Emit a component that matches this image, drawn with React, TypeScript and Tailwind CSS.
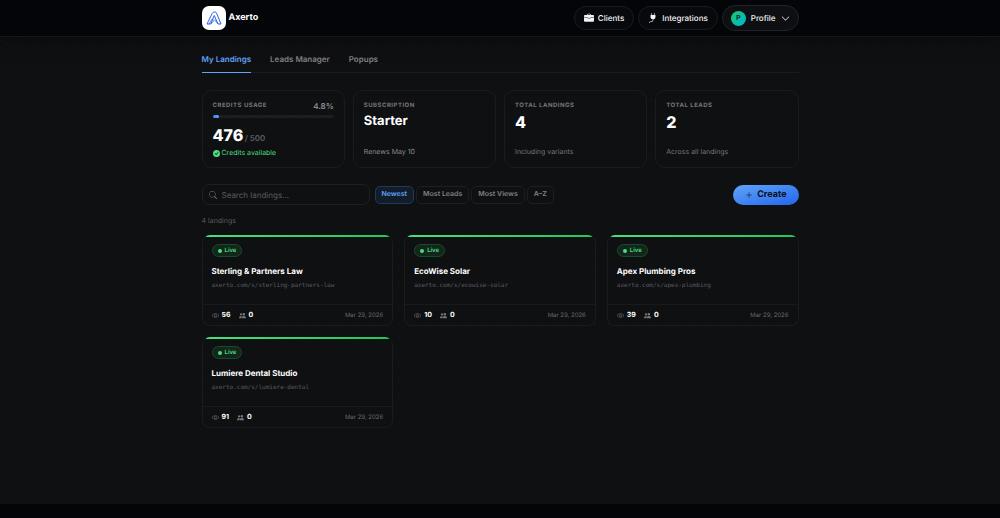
import { useState } from 'react'
import {
  BsBriefcaseFill,
  BsCheckCircleFill,
  BsChevronDown,
  BsEye,
  BsPeopleFill,
  BsPlugFill,
  BsPlusLg,
  BsSearch,
} from 'react-icons/bs'

type Landing = {
  name: string
  slug: string
  views: number
  leads: number
  date: string
}

const landings: Landing[] = [
  { name: 'Sterling & Partners Law', slug: 'sterling-partners-law', views: 56, leads: 0, date: 'Mar 29, 2026' },
  { name: 'EcoWise Solar', slug: 'ecowise-solar', views: 10, leads: 0, date: 'Mar 29, 2026' },
  { name: 'Apex Plumbing Pros', slug: 'apex-plumbing', views: 39, leads: 0, date: 'Mar 29, 2026' },
  { name: 'Lumiere Dental Studio', slug: 'lumiere-dental', views: 91, leads: 0, date: 'Mar 29, 2026' },
]

const tabs = ['My Landings', 'Leads Manager', 'Popups']
const sorts = ['Newest', 'Most Leads', 'Most Views', 'A–Z']

function Logo() {
  return (
    <span className="flex size-6 items-center justify-center rounded-[7px] bg-white">
      <svg viewBox="0 0 32 28" className="h-[14px] w-4" fill="none" stroke="#2f62e8" strokeWidth="2" strokeLinejoin="round">
        <path d="M2 26 12.5 4.5Q14 2 16.5 2h1.5q2 0 3 2l9 22h-6l-7.5-17L9.5 26Z" />
        <path d="M9.5 26 17 17.5l7 8.5M13 15l-7 11" strokeWidth="1.6" />
      </svg>
    </span>
  )
}

function Header() {
  return (
    <header className="relative border-b border-[#14161a] bg-[#040509] px-4 shadow-[0_4px_20px_rgba(0,0,0,0.35)]">
      <div className="mx-auto flex h-9 max-w-[597px] items-center justify-between">
        <a href="#" className="flex items-center gap-[3px] text-[9px] font-bold text-white">
          <Logo />
          Axerto
        </a>
        <nav className="flex items-center gap-1 text-[8px] font-medium text-[#f4f4f5]">
          <button type="button" className="flex h-6 items-center gap-1 rounded-full border border-[#1b1c20] bg-[#08090d] px-[9px]">
            <BsBriefcaseFill className="size-[10px]" />
            Clients
          </button>
          <button type="button" className="flex h-6 items-center gap-1 rounded-full border border-[#1b1c20] bg-[#08090d] px-[9px]">
            <BsPlugFill className="size-[10px]" />
            Integrations
          </button>
          <button type="button" className="flex h-[26px] items-center gap-[5px] rounded-full border border-[#222326] bg-[#0e0f12] px-2">
            <span className="flex size-[15px] items-center justify-center rounded-full bg-linear-to-br from-[#22c55e] to-[#06b6d4] text-[7px] font-bold text-[#0b2b27]">
              P
            </span>
            Profile
            <BsChevronDown className="size-[9px]" />
          </button>
        </nav>
      </div>
    </header>
  )
}

function StatCard({ label, children, note }: { label: string; children: React.ReactNode; note: React.ReactNode }) {
  return (
    <section className="flex h-[78px] flex-col rounded-[10px] border border-[#1b1c1f] bg-[#0f1012]/60 p-[10px]">
      <h2 className="text-[6px] leading-[10px] font-bold tracking-[0.5px] text-[#76777b] uppercase">{label}</h2>
      {children}
      <div className="mt-auto text-[7px] leading-[10px] text-[#76777b]">{note}</div>
    </section>
  )
}

function LandingCard({ landing }: { landing: Landing }) {
  return (
    <article className="overflow-hidden rounded-[8px] border border-t-0 border-[#1b1c1f] bg-[#0f1012]/60">
      <div className="h-[2px] bg-linear-to-r from-[#4ade80] to-[#22c55e]" />
      <div className="h-[67px] px-[9px] pt-[7px]">
        <span className="flex h-[13px] w-fit items-center gap-[3px] rounded-full border border-[#1a4a2e] bg-[#12261b] px-[5px] text-[6px] font-semibold text-[#4ade80]">
          <span className="size-1 rounded-full bg-[#4ade80]" />
          Live
        </span>
        <h3 className="mt-2 text-[8px] leading-3 font-bold text-white">{landing.name}</h3>
        <p className="mt-1 font-['DejaVu_Sans_Mono',monospace] text-[6px] leading-[10px] text-[#5b5c60]">
          axerto.com/s/{landing.slug}
        </p>
      </div>
      <div className="flex h-[21px] items-center gap-2 border-t border-[#191a1d] px-[9px] text-[7px]">
        <span className="flex items-center gap-[3px] font-bold text-white">
          <BsEye className="size-[7px] text-[#76777b]" />
          {landing.views}
        </span>
        <span className="flex items-center gap-[3px] font-bold text-white">
          <BsPeopleFill className="size-[7px] text-[#76777b]" />
          {landing.leads}
        </span>
        <time className="ml-auto text-[6px] text-[#6b6c70]">{landing.date}</time>
      </div>
    </article>
  )
}

export default function App() {
  const [tab, setTab] = useState('My Landings')
  const [sort, setSort] = useState('Newest')
  const [query, setQuery] = useState('')

  const shown = landings.filter((l) => l.name.toLowerCase().includes(query.toLowerCase()))

  return (
    <div className="flex min-h-screen flex-col bg-[#040509] font-['Inter',sans-serif] text-white [text-rendering:geometricPrecision] [&_button]:[text-rendering:inherit]">
      <Header />
      <main className="mb-[14px] grow bg-[#0f1012] bg-[radial-gradient(circle,#131417_1px,transparent_1px)] bg-size-[14px_14px] px-4">
        <div className="mx-auto max-w-[597px] pt-3">
          <div role="tablist" className="flex gap-[19px] border-b border-[#1b1c1f]">
            {tabs.map((t) => (
              <button
                key={t}
                type="button"
                role="tab"
                aria-selected={t === tab}
                onClick={() => setTab(t)}
                className={`-mb-px h-6 border-b pb-1 text-[8px] font-semibold ${
                  t === tab ? 'border-[#60a5fa] text-[#60a5fa]' : 'border-transparent text-[#808185]'
                }`}
              >
                {t}
              </button>
            ))}
          </div>

          <div className="mt-[17px] grid grid-cols-4 gap-2">
            <section className="flex h-[78px] flex-col rounded-[10px] border border-[#1b1c1f] bg-[#0f1012]/60 p-[10px]">
              <div className="flex items-center justify-between">
                <h2 className="text-[6px] leading-[10px] font-bold tracking-[0.5px] text-[#76777b] uppercase">
                  Credits usage
                </h2>
                <span className="text-[8px] leading-[10px] font-semibold text-[#8a8b8f]">4.8%</span>
              </div>
              <div className="mt-1 h-[3px] shrink-0 rounded-full bg-[#1d1e21]">
                <div className="h-full w-[5%] rounded-full bg-linear-to-r from-[#3b82f6] to-[#60a5fa]" />
              </div>
              <p className="mt-[7px] text-base leading-5 font-extrabold">
                476 <span className="-ml-[2px] text-[8px] font-semibold text-[#5b5c60]">/ 500</span>
              </p>
              <p className="flex items-center gap-[2px] text-[7px] leading-[10px] text-[#4ade80]">
                <BsCheckCircleFill className="size-[7px]" />
                Credits available
              </p>
            </section>
            <StatCard label="Subscription" note={<span className="text-[#8a8b8f]">Renews May 10</span>}>
              <p className="mt-[2px] text-[13px] leading-4 font-bold">Starter</p>
            </StatCard>
            <StatCard label="Total landings" note="Including variants">
              <p className="mt-px text-base leading-5 font-extrabold">4</p>
            </StatCard>
            <StatCard label="Total leads" note="Across all landings">
              <p className="mt-px text-base leading-5 font-extrabold">2</p>
            </StatCard>
          </div>

          <div className="mt-4 flex items-center">
            <label className="flex h-[21px] w-[168px] items-center gap-[5px] rounded-[7px] border border-[#1e1f22] bg-[#0f1012] px-[6px]">
              <BsSearch className="size-2 shrink-0 text-[#76777b]" />
              <input
                type="search"
                aria-label="Search landings"
                placeholder="Search landings..."
                value={query}
                onChange={(e) => setQuery(e.target.value)}
                className="w-full bg-transparent text-[8px] outline-none [text-rendering:inherit] placeholder:text-[#5b5c60]"
              />
            </label>
            <div className="ml-[5px] flex gap-[2px]">
              {sorts.map((s) => (
                <button
                  key={s}
                  type="button"
                  onClick={() => setSort(s)}
                  className={`flex h-[18px] items-center rounded-[5px] border px-[6px] text-[7px] font-semibold ${
                    s === sort
                      ? 'border-[#1e3a5f] bg-[#131c29] text-[#60a5fa]'
                      : 'border-[#1e1f22] bg-[#0f1012] text-[#808185]'
                  }`}
                >
                  {s}
                </button>
              ))}
            </div>
            <button
              type="button"
              className="ml-auto flex h-5 items-center gap-1 rounded-full bg-linear-to-br from-[#60a5fa] to-[#2563eb] px-3 text-[9px] font-bold text-[#0a0f1c]"
            >
              <BsPlusLg className="size-2" />
              Create
            </button>
          </div>

          <p className="mt-[11px] text-[7px] leading-[10px] text-[#5b5c60]">{shown.length} landings</p>

          <div className="mt-[9px] grid grid-cols-3 gap-[11px]">
            {shown.map((l) => (
              <LandingCard key={l.slug} landing={l} />
            ))}
          </div>
        </div>
      </main>
    </div>
  )
}
